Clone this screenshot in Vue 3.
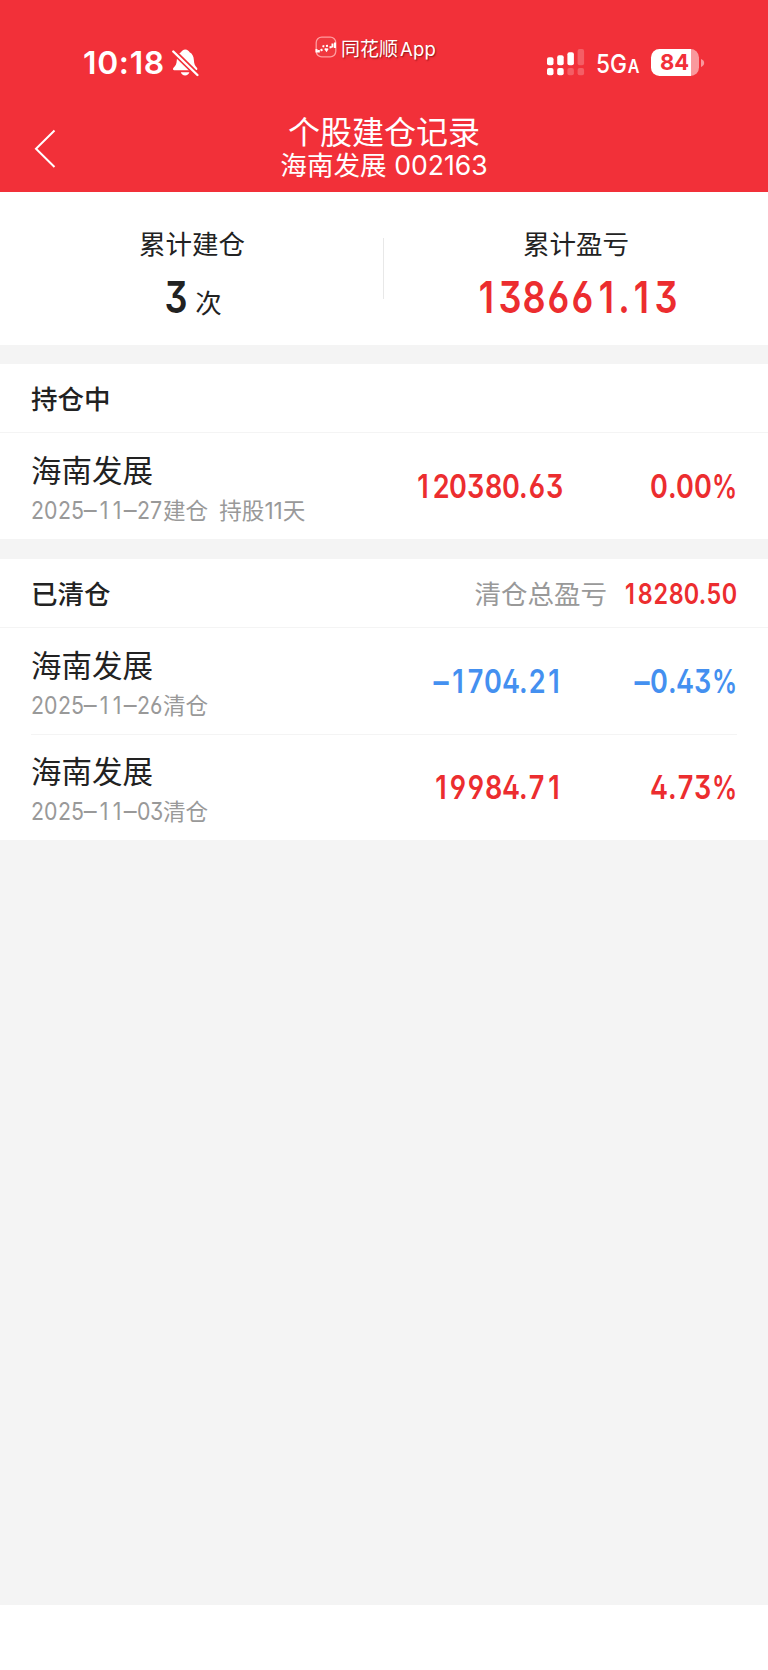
<script setup>
import { h } from 'vue'

const closed = [
  { name: '海南发展', date: '2025–11–26', amount: '−1704.21', rate: '−0.43%', tone: 'down' },
  { name: '海南发展', date: '2025–11–03', amount: '19984.71', rate: '4.73%', tone: 'up' },
]

// Condensed figures set in equal-width cells so that columns line up
const kinds = { '.': 'dot', '%': 'pct', '−': 'dash', '–': 'dash' }
const Figures = (props) =>
  h('span', { class: 'figures' }, [...props.text].map((c) => h('span', { class: ['cell', kinds[c]] }, [h('span', c)])))
Figures.props = ['text']
</script>

<template>
  <div class="page">
    <header class="top">
      <div class="status">
        <span class="time">10:18</span>
        <svg class="bell" width="28" height="30" viewBox="0 0 28 30">
          <path d="M10 4.300c.8-1.200 2-2.700 4.300-2.700s3.500 1.500 4.300 2.700c2.900 1.500 4.100 4.200 4.300 8 .2 4 1.100 5.500 3 7.500.8.900.6 2.500-.8 2.500H3.300c-1.400 0-1.700-1.500-.8-2.500 2.100-2 3.100-3.500 3.300-7.500.2-3.800 1.200-6.500 4.200-8z" fill="#fff" />
          <path d="M9.800 24.300h8.600c-.5 2-2.200 3.200-4.300 3.200s-3.800-1.200-4.300-3.200z" fill="#fff" />
          <path d="M1.500 2.500L27 27.500" stroke="#f23039" stroke-width="5.500" />
          <path d="M2.300 3.500L26.400 27" stroke="#fff" stroke-width="2.400" stroke-linecap="round" />
        </svg>
        <div class="mark">
          <svg width="22" height="22" viewBox="0 0 22 22">
            <rect x="1.200" y="1.200" width="19.600" height="19.600" rx="5.500" fill="#f0383f" stroke="#ff9c9f" stroke-width="1.300" />
            <path d="M1.500 13v2.500h2.300V14M5.500 14.500l2-1M7.500 10l1.800.5M10 12.500l1.500 2 1.200-2M11 10l2-.3M14.500 11.500l2-.5M17.500 7.500v4M20 6.500v5.500" fill="none" stroke="#fff" stroke-width="2" />
          </svg>
          <span>同花顺<b>App</b></span>
        </div>
        <svg class="signal" width="38" height="28" viewBox="0 0 38 28">
          <g fill="#fff">
            <rect x="0" y="8.300" width="6.500" height="8" rx="2" />
            <rect x="0" y="19" width="6.500" height="7.300" rx="2" />
            <rect x="10.200" y="6.300" width="6.500" height="10" rx="2" />
            <rect x="10.200" y="19" width="6.500" height="7.300" rx="2" />
            <rect x="20.400" y="3.300" width="6.500" height="13" rx="2" />
            <g opacity=".22">
              <rect x="20.400" y="19" width="6.500" height="7.300" rx="2" />
              <rect x="30.600" y="0" width="6.500" height="16.300" rx="2" />
              <rect x="30.600" y="19" width="6.500" height="7.300" rx="2" />
            </g>
          </g>
        </svg>
        <span class="net">5G<small>A</small></span>
        <div class="battery"><span>84</span></div>
        <svg class="nub" width="4" height="10" viewBox="0 0 4 10"><path d="M0 1c2 .8 3.200 2.200 3.200 4S2 8.200 0 9z" fill="#fff" opacity=".5" /></svg>
      </div>
      <div class="nav">
        <svg class="back" width="24" height="42" viewBox="0 0 24 42">
          <path d="M20.500 2.500L2 20.700l18.500 18.300" fill="none" stroke="#fff" stroke-width="2" />
        </svg>
        <div class="titles">
          <h1>个股建仓记录</h1>
          <p>海南发展 <span>002163</span></p>
        </div>
      </div>
    </header>

    <section class="summary">
      <div class="stat">
        <span class="label">累计建仓</span>
        <span class="value count"><Figures class="big" text="3" /><i>次</i></span>
      </div>
      <div class="divider"></div>
      <div class="stat">
        <span class="label">累计盈亏</span>
        <span class="value"><Figures class="big up" text="138661.13" /></span>
      </div>
    </section>

    <section class="card">
      <div class="head"><h2>持仓中</h2></div>
      <div class="row">
        <div class="info">
          <span class="name">海南发展</span>
          <span class="meta"><Figures class="date" text="2025–11–27" />建仓<span class="held">持股<em>11</em>天</span></span>
        </div>
        <Figures class="amount up" text="120380.63" />
        <Figures class="rate up" text="0.00%" />
      </div>
    </section>

    <section class="card">
      <div class="head">
        <h2>已清仓</h2>
        <span class="total">清仓总盈亏</span>
        <Figures class="sum up" text="18280.50" />
      </div>
      <div v-for="item in closed" :key="item.date" class="row">
        <div class="info">
          <span class="name">{{ item.name }}</span>
          <span class="meta"><Figures class="date" :text="item.date" />清仓</span>
        </div>
        <Figures class="amount" :class="item.tone" :text="item.amount" />
        <Figures class="rate" :class="item.tone" :text="item.rate" />
      </div>
    </section>

    <div class="home"></div>
  </div>
</template>

<style>
body { margin: 0; }
.figures {
  display: flex; justify-content: flex-end; white-space: nowrap;
  font-family: Inter, sans-serif; font-weight: 600;
  font-feature-settings: "ss01", "cv09";
}
.figures .cell { width: .538em; flex: none; display: flex; justify-content: center; }
.figures .cell > span { flex: none; transform: scaleX(.82); }
.figures .dot { width: .26em; }
.figures .pct { width: .77em; }
.figures .pct > span { transform: scaleX(.76); }
.figures .dash > span { transform: scaleX(.95); }
.figures.big .cell:not(.dot) { width: .545em; }
.figures.amount .cell:not(.dot), .figures.rate .cell:not(.dot):not(.pct) { width: .53em; }
.figures.date .cell > span { transform: scaleX(.87); }
.figures.date .dash > span { transform: scaleX(1.05); }
</style>

<style scoped>
* { box-sizing: border-box; }
.page {
  width: 768px; height: 1670px; display: flex; flex-direction: column;
  background: #f4f4f4; color: #222; overflow: hidden;
  font-family: Inter, "Noto Sans CJK SC", sans-serif;
}
h1, h2, p { margin: 0; font-weight: 400; }
i, em { font-style: normal; }

.top { height: 192px; background: #f23039; color: #fff; flex: none; }
.status { height: 108px; display: flex; align-items: flex-start; }
.time { width: 88px; margin: 43px 0 0 83px; font-size: 31.800px; line-height: 40px; font-weight: 600; letter-spacing: .7px; white-space: nowrap; }
.bell { margin: 48px 0 0 0; }
.mark { display: flex; width: 130px; margin: 36px 0 0 116px; gap: 4px; font-size: 19px; line-height: 26px; white-space: nowrap; }
.mark span { text-shadow: 1px 1px 1.500px rgba(80, 0, 0, .6); }
.mark svg { flex: none; }
.mark b { font-weight: 400; font-size: 18.500px; margin-left: 2px; letter-spacing: .2px; }
.signal { margin: 49px 0 0 102px; flex: none; }
.net { margin: 46px 0 0 11px; width: 55px; font-size: 26px; line-height: 35px; font-weight: 500; transform: scaleX(.87); transform-origin: left; white-space: nowrap; }
.net small { font-size: 18.500px; font-weight: 600; margin-left: 1px; }
.battery {
  width: 48px; height: 27px; margin-top: 49px; border-radius: 8.500px;
  background: linear-gradient(90deg, #fff 40px, #f9999d 40px);
  color: #f23039; font-size: 22px; line-height: 27px; font-weight: 700; padding-left: 9px;
}
.nub { margin: 58px 0 0 2px; flex: none; }
.nav { display: flex; height: 84px; }
.back { margin: 20px 0 0 34px; flex: none; }
.titles { width: 652px; text-align: center; display: flex; flex-direction: column; }
h1 { font-size: 32px; line-height: 40px; margin-top: 5px; }
.titles p { font-size: 26.600px; line-height: 30px; margin-top: -3px; }

.up { color: #ec2d2f; }
.down { color: #4490f0; }

.summary { height: 153px; background: #fff; display: flex; flex: none; margin-bottom: 19px; }
.stat { flex: 1; display: flex; flex-direction: column; align-items: center; }
.label { font-size: 26.500px; line-height: 36px; margin-top: 34px; }
.value { display: flex; align-items: baseline; margin-top: 7px; height: 56px; line-height: 56px; }
.count { padding-left: 2px; }
.value i { font-size: 26.500px; margin-left: 7px; }
.big { font-size: 44px; }
.divider { width: 1px; height: 61px; margin: 46px 0 0 -1px; background: #e8e8e8; }

.card { background: #fff; flex: none; margin-bottom: 20px; }
.head { height: 68px; padding: 0 31px 1px; display: flex; align-items: center; }
h2 { font-size: 26.500px; font-weight: 500; flex: 1; }
.total { font-size: 26.500px; color: #999; }
.sum { width: 130px; font-size: 28.500px; padding-top: 2px; }
.row { height: 107px; margin: 0 31px; border-top: 1px solid #f4f4f4; display: flex; align-items: center; }
.row:last-child { height: 106.500px; }
.head + .row { margin: 0; padding: 0 31px; }
.info { width: 300px; display: flex; flex-direction: column; padding-top: 8px; }
.name { font-size: 30.500px; line-height: 41px; }
.meta { font-size: 22.600px; line-height: 39px; height: 39px; color: #999; display: flex; }
.date { width: 132px; font-size: 24.500px; font-weight: 400; }
.held { margin-left: 11px; }
.amount { width: 232px; font-size: 33px; }
.rate { flex: 1; font-size: 33px; }
.home { height: 65px; background: #fff; margin-top: auto; flex: none; }
</style>
